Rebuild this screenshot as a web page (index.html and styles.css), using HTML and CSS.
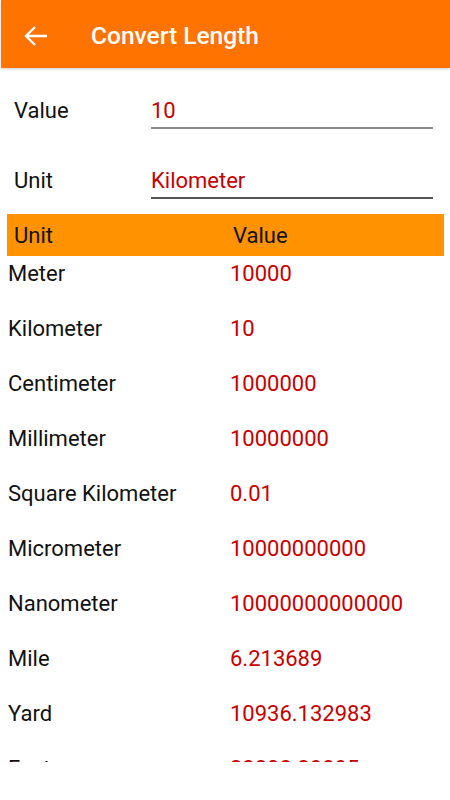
FILE: index.html
```html
<!DOCTYPE html>
<html lang="en">

<head>
    <meta charset="UTF-8">
    <meta name="viewport" content="width=device-width, initial-scale=1.0">
    <title>Convert Length</title>
    <link rel="stylesheet" href="styles.css">
</head>

<body>

    <div id="appBar">
        <svg class="backIcon" width="32" height="32" viewBox="0 0 32 32">
            <path d="M6 16H27M15 7L6 16L15 25" fill="none" stroke="#fff" stroke-width="2.4"></path>
        </svg>
        <span class="title">Convert Length</span>
    </div>

    <div id="inputPanel">
        <div class="field">
            <span class="fieldLabel">Value</span>
            <span class="fieldInput">10</span>
        </div>
        <div class="field">
            <span class="fieldLabel">Unit</span>
            <span class="fieldInput darkLine">Kilometer</span>
        </div>
    </div>

    <div id="tableHead">
        <span class="colUnit">Unit</span>
        <span class="colValue">Value</span>
    </div>

    <div id="resultList">
        <div class="row"><span class="rowUnit">Meter</span><span class="rowValue">10000</span></div>
        <div class="row"><span class="rowUnit">Kilometer</span><span class="rowValue">10</span></div>
        <div class="row"><span class="rowUnit">Centimeter</span><span class="rowValue">1000000</span></div>
        <div class="row"><span class="rowUnit">Millimeter</span><span class="rowValue">10000000</span></div>
        <div class="row"><span class="rowUnit">Square Kilometer</span><span class="rowValue">0.01</span></div>
        <div class="row"><span class="rowUnit">Micrometer</span><span class="rowValue">10000000000</span></div>
        <div class="row"><span class="rowUnit">Nanometer</span><span class="rowValue">10000000000000</span></div>
        <div class="row"><span class="rowUnit">Mile</span><span class="rowValue">6.213689</span></div>
        <div class="row"><span class="rowUnit">Yard</span><span class="rowValue">10936.132983</span></div>
        <div class="row"><span class="rowUnit">Feet</span><span class="rowValue">32808.39895</span></div>
    </div>

</body>

</html>
```

FILE: styles.css
```css
body {
    margin: 0;
    background-color: white;
    font-family: Roboto, "Noto Sans", sans-serif;
}

#appBar {
    height: 68px;
    box-sizing: border-box;
    padding-top: 4px;
    margin-left: 1px;
    background-color: #ff7300;
    display: flex;
    align-items: center;
    box-shadow: 0 1px 3px rgba(0, 0, 0, 0.2);
}

.backIcon {
    margin-left: 19px;
    margin-right: 39px;
}

.title {
    color: white;
    font-size: 24.5px;
    font-weight: 500;
    padding-bottom: 1px;
}

#inputPanel {
    padding: 0 17px 0 14px;
    margin-top: -9px;
}

.field {
    display: flex;
    align-items: flex-end;
    height: 70px;
}

.fieldLabel {
    width: 137px;
    font-size: 22px;
    line-height: 26px;
    color: #111;
    padding-bottom: 5px;
}

.fieldInput {
    flex: 1;
    font-size: 22px;
    line-height: 26px;
    color: #c80000;
    padding-bottom: 3px;
    border-bottom: 2px solid #8a8a8a;
}

.fieldInput.darkLine {
    border-bottom-color: #555;
}

#tableHead {
    margin: 15px 6px 0 7px;
    height: 42px;
    background-color: #ff9200;
    display: flex;
    align-items: center;
    font-size: 22px;
    color: #111;
}

.colUnit {
    width: 219px;
    padding-left: 7px;
}

#resultList {
    height: 506px;
    overflow: hidden;
    padding-left: 8px;
}

.row {
    display: flex;
    height: 55px;
    padding-top: 5px;
    box-sizing: border-box;
    font-size: 22px;
    line-height: 26px;
}

.rowUnit {
    width: 222px;
    color: #111;
}

.rowValue {
    color: #c80000;
}
```
